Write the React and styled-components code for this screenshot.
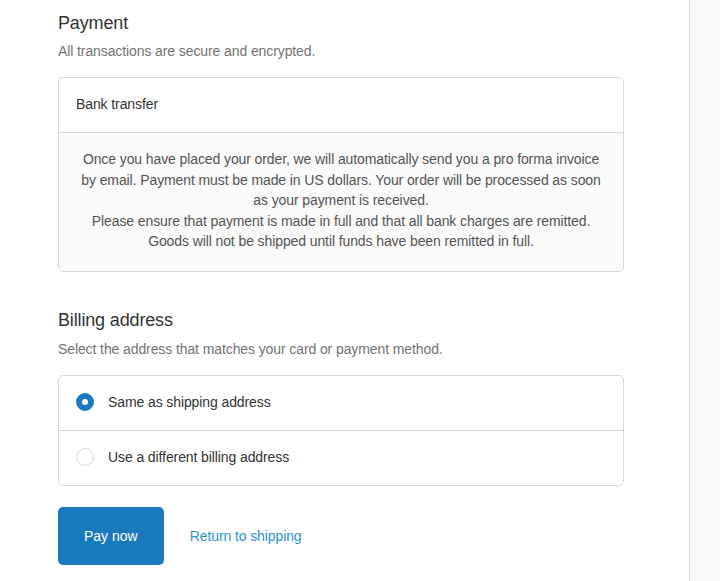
import { useState } from "react";
import { styled, createGlobalStyle } from "styled-components";

const GlobalStyle = createGlobalStyle`
  html, body {
    margin: 0;
    padding: 0;
    background: #fff;
  }
  body {
    font-family: "Liberation Sans", "Helvetica Neue", Helvetica, Arial, sans-serif;
    font-size: 14px;
    letter-spacing: -0.1px;
    color: #545454;
    -webkit-font-smoothing: antialiased;
  }
`;

const Page = styled.div`
  display: flex;
  height: 581px;
  overflow: hidden;
`;

const Main = styled.main`
  width: 689px;
  box-sizing: border-box;
  padding: 12px 65px 0 58px;
`;

const Sidebar = styled.aside`
  flex: 1;
  background: #fafafa;
  border-left: 1px solid #e1e1e1;
`;

const Section = styled.section`
  margin-bottom: ${(p) => p.$space || "0"};
`;

const Heading = styled.h2`
  margin: 0;
  font-size: 18px;
  font-weight: 400;
  line-height: 23px;
  letter-spacing: -0.15px;
  color: #333333;
`;

const Subtext = styled.p`
  margin: ${(p) => p.$gap || "6px"} 0 0;
  font-size: 14px;
  line-height: 20px;
  color: #737373;
`;

const Card = styled.div`
  margin-top: 16px;
  border: 1px solid #d9d9d9;
  border-radius: 5px;
  overflow: hidden;
`;

const Row = styled.label`
  display: flex;
  align-items: center;
  gap: 14px;
  height: 54px;
  box-sizing: border-box;
  padding: 0 17px 2px;
  color: #333333;
  cursor: pointer;
  & + & {
    border-top: 1px solid #d9d9d9;
    height: 55px;
  }
`;

const Radio = styled.span`
  width: 18px;
  height: 18px;
  box-sizing: border-box;
  border-radius: 50%;
  flex: none;
  border: ${(p) => (p.$checked ? "6px solid #197bbd" : "1px solid #d9d9d9")};
  background: #fff;
`;

const Details = styled.div`
  background: #fafafa;
  border-top: 1px solid #d9d9d9;
  padding: 16px 17px 19px;
  text-align: center;
  line-height: 20.5px;
  color: #545454;
`;

const Actions = styled.div`
  display: flex;
  align-items: center;
  gap: 26px;
  margin-top: 21px;
`;

const PayButton = styled.button`
  height: 58px;
  padding: 0 26px;
  border: none;
  border-radius: 5px;
  background: #197bbd;
  color: #fff;
  font: inherit;
  font-size: 14px;
  cursor: pointer;
`;

const BackLink = styled.a`
  color: #2b93cf;
  text-decoration: none;
  cursor: pointer;
`;

export default function App() {
  const [billing, setBilling] = useState("same");

  return (
    <>
      <GlobalStyle />
      <Page>
        <Main>
          <Section $space="37px">
            <Heading>Payment</Heading>
            <Subtext>All transactions are secure and encrypted.</Subtext>
            <Card>
              <Row as="div">Bank transfer</Row>
              <Details>
                Once you have placed your order, we will automatically send you
                a pro forma invoice by email. Payment must be made in US
                dollars. Your order will be processed as soon as your payment
                is received.
                <br />
                Please ensure that payment is made in full and that all bank
                charges are remitted.
                <br />
                Goods will not be shipped until funds have been remitted in
                full.
              </Details>
            </Card>
          </Section>
          <Section>
            <Heading>Billing address</Heading>
            <Subtext $gap="7px">
              Select the address that matches your card or payment method.
            </Subtext>
            <Card>
              <Row onClick={() => setBilling("same")}>
                <Radio $checked={billing === "same"} />
                Same as shipping address
              </Row>
              <Row onClick={() => setBilling("different")}>
                <Radio $checked={billing === "different"} />
                Use a different billing address
              </Row>
            </Card>
          </Section>
          <Actions>
            <PayButton>Pay now</PayButton>
            <BackLink>Return to shipping</BackLink>
          </Actions>
        </Main>
        <Sidebar />
      </Page>
    </>
  );
}
